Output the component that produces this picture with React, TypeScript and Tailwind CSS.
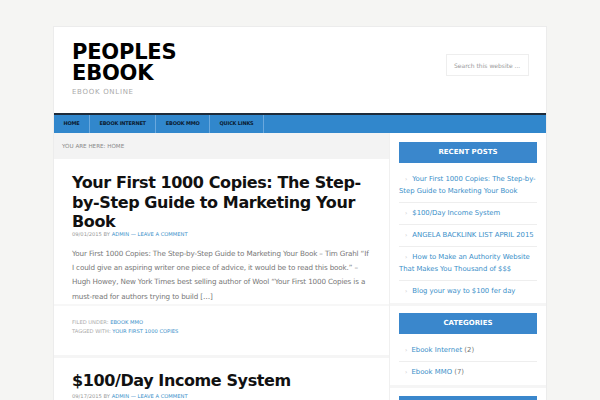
import React from "react";

const recentPosts = [
  "Your First 1000 Copies: The Step-by-Step Guide to Marketing Your Book",
  "$100/Day Income System",
  "ANGELA BACKLINK LIST APRIL 2015",
  "How to Make an Authority Website That Makes You Thousand of $$$",
  "Blog your way to $100 fer day",
];

const categories = [
  { name: "Ebook Internet", count: 2 },
  { name: "Ebook MMO", count: 7 },
];

const navItems = ["HOME", "EBOOK INTERNET", "EBOOK MMO", "QUICK LINKS"];

function WidgetTitle({ children }: { children: React.ReactNode }) {
  return (
    <h4 className="h-[21px] bg-[#3a87cc] text-white text-[7px] font-bold flex items-center justify-center">
      {children}
    </h4>
  );
}

export default function App() {
  return (
    <div
      className="min-h-[400px] bg-[#f5f5f3] pt-[27px] overflow-hidden"
      style={{ fontFamily: '"DejaVu Sans", sans-serif' }}
    >
      <div className="w-[492px] mx-auto bg-white shadow-[0_0_0_1px_#ececec]">
        {/* header */}
        <header className="h-[86px] flex justify-between pl-[18px] pr-[17px]">
          <div className="pt-[15px]">
            <h1 className="text-[21px] leading-[21px] font-bold text-black w-[120px] tracking-[-0.2px]">
              PEOPLES EBOOK
            </h1>
            <p className="mt-[4px] text-[7px] leading-[8px] tracking-[0.7px] text-[#aaa]">
              EBOOK ONLINE
            </p>
          </div>
          <div className="pt-[27px]">
            <div className="w-[83px] h-[22px] border border-[#eeeeee] flex items-center px-[7px] text-[6px] text-[#999] whitespace-nowrap">
              Search this website ...
            </div>
          </div>
        </header>

        {/* nav */}
        <nav className="h-[20px] bg-[#3187cc] border-t-[2px] border-[#1d2b3a] flex">
          {navItems.map((item) => (
            <div
              key={item}
              className="px-[9.5px] border-r border-[#6aa8dd] flex items-center text-[5px] tracking-[-0.2px] font-bold text-[#0b1b30]"
            >
              {item}
            </div>
          ))}
        </nav>

        <div className="flex">
          {/* main content */}
          <main className="w-[336px] border-r border-[#f0f0f0]">
            <div className="h-[26px] bg-[#f3f3f3] flex items-center px-[8px] text-[5.6px] text-[#888]">
              YOU ARE HERE: HOME
            </div>

            <article className="border-b-[3px] border-[#f5f5f5]">
              <div className="px-[18px] pt-[14px]">
                <h2 className="text-[16px] leading-[19.5px] tracking-[-0.4px] font-bold text-[#111]">
                  Your First 1000 Copies: The Step-by-Step Guide to Marketing Your Book
                </h2>
                <p className="mt-[-1px] text-[5.2px] leading-[6px] text-[#999]">
                  09/01/2015 BY <span className="text-[#3a8fc9]">ADMIN</span>{" "}
                  <span className="text-[#3a8fc9]">— LEAVE A COMMENT</span>
                </p>
                <p className="mt-[10px] text-[7.2px] leading-[14.4px] tracking-[-0.15px] text-[#777]">
                  Your First 1000 Copies: The Step-by-Step Guide to Marketing Your Book – Tim Grahl “If I could give an aspiring writer one piece of advice, it would be to read this book.” – Hugh Howey, New York Times best selling author of Wool “Your First 1000 Copies is a must-read for authors trying to build […]
                </p>
              </div>
              <div className="border-t-[2px] border-[#f7f7f7] px-[18px] pt-[12px] pb-[19px] text-[5.2px] leading-[9px] text-[#aaa]">
                <p>
                  FILED UNDER: <span className="text-[#3a8fc9]">EBOOK MMO</span>
                </p>
                <p>
                  TAGGED WITH: <span className="text-[#3a8fc9]">YOUR FIRST 1000 COPIES</span>
                </p>
              </div>
            </article>

            <article>
              <div className="px-[18px] pt-[13px]">
                <h2 className="text-[16px] leading-[19.5px] tracking-[-0.4px] font-bold text-[#111]">
                  $100/Day Income System
                </h2>
                <p className="mt-[2px] text-[5.2px] leading-[6px] text-[#999]">
                  09/17/2015 BY <span className="text-[#3a8fc9]">ADMIN</span>{" "}
                  <span className="text-[#3a8fc9]">— LEAVE A COMMENT</span>
                </p>
              </div>
            </article>
          </main>

          {/* sidebar */}
          <aside className="flex-1">
            <section className="px-[9px] pt-[9px] pb-[1.5px] border-b-[3px] border-[#f5f5f5]">
              <WidgetTitle>RECENT POSTS</WidgetTitle>
              <ul className="mt-[5.5px]">
                {recentPosts.map((p, i) => (
                  <li
                    key={p}
                    className={`py-[4.5px] text-[6.9px] leading-[12px] tracking-[-0.05px] text-[#3a8fc9] ${
                      i < recentPosts.length - 1 ? "border-b border-[#eeeeee]" : ""
                    }`}
                  >
                    <span className="text-[#c4c4c4] text-[6px] pl-[6px] pr-[5px]">›</span>
                    {p}
                  </li>
                ))}
              </ul>
            </section>

            <section className="px-[9px] pt-[7px] pb-[2px] border-b-[3px] border-[#f5f5f5]">
              <WidgetTitle>CATEGORIES</WidgetTitle>
              <ul className="mt-[5.5px]">
                {categories.map((c, i) => (
                  <li
                    key={c.name}
                    className={`py-[4.5px] text-[6.9px] leading-[12px] ${
                      i < categories.length - 1 ? "border-b border-[#eeeeee]" : ""
                    }`}
                  >
                    <span className="text-[#c4c4c4] text-[6px] pl-[6px] pr-[4px]">›</span>
                    <span className="text-[#3a8fc9]">{c.name}</span>
                    <span className="text-[#777]"> ({c.count})</span>
                  </li>
                ))}
              </ul>
            </section>

            <section className="px-[9px] pt-[8px]">
              <WidgetTitle>ARCHIVES</WidgetTitle>
            </section>
          </aside>
        </div>
      </div>
    </div>
  );
}
